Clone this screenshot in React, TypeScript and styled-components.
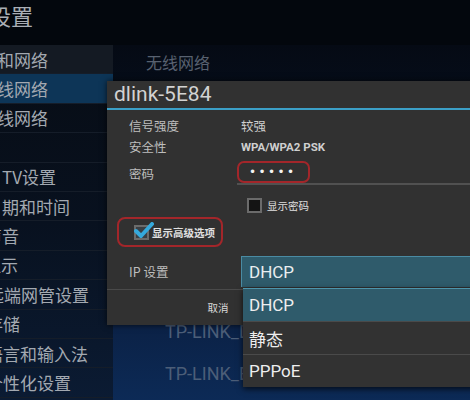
import styled, {createGlobalStyle} from 'styled-components';

const GlobalStyle = createGlobalStyle`
  html, body {
    margin: 0;
    padding: 0;
    background: #04080f;
  }
  * {
    box-sizing: border-box;
  }
`;

interface MenuItem {
  label: string;
  shift: number;
  kind?: 'header' | 'selected' | 'blank';
}

const menu: MenuItem[] = [
  {label: '无线和网络', shift: -37, kind: 'header'},
  {label: '无线网络', shift: -20, kind: 'selected'},
  {label: '有线网络', shift: -20},
  {label: '', shift: 0, kind: 'blank'},
  {label: 'TV设置', shift: 2},
  {label: '日期和时间', shift: -15},
  {label: '声音', shift: -15},
  {label: '显示', shift: -16},
  {label: '远端网管设置', shift: -13},
  {label: '存储', shift: -14},
  {label: '语言和输入法', shift: -14},
  {label: '个性化设置', shift: -14},
];

const networks = [
  'dlink-5E84',
  'ChinaNet-8Fq2',
  'TP-LINK_A3',
  'Tenda_07C1',
  'MERCURY_52',
  'TP-LINK_D',
  'TP-LINK_E',
];

const ipModes = ['DHCP', '静态', 'PPPoE'];

const App = () => {
  return (
    <Screen>
      <GlobalStyle />
      <TitleBar>
        <TitleText>设置</TitleText>
      </TitleBar>
      <Body>
        <LeftMenu>
          {menu.map((item, i) => (
            <MenuRow key={i} kind={item.kind}>
              <MenuLabel style={{marginLeft: item.shift}}>{item.label}</MenuLabel>
            </MenuRow>
          ))}
        </LeftMenu>
        <RightPane>
          <PaneHeader>无线网络</PaneHeader>
          <NetworkList>
            {networks.map(n => (
              <NetworkRow key={n}>{n}</NetworkRow>
            ))}
          </NetworkList>
        </RightPane>
      </Body>

      <Dialog>
        <DialogTitle>dlink-5E84</DialogTitle>
        <DialogContent>
          <InfoRow>
            <Label>信号强度</Label>
            <Value>较强</Value>
          </InfoRow>
          <InfoRow>
            <Label>安全性</Label>
            <Value bold>WPA/WPA2 PSK</Value>
          </InfoRow>
          <PasswordRow>
            <Label>密码</Label>
            <PasswordField>
              <Marked>
                <Dots>•••••</Dots>
              </Marked>
            </PasswordField>
          </PasswordRow>
          <CheckRow>
            <Spacer />
            <CheckLabel>
              <Box />
              <SmallText>显示密码</SmallText>
            </CheckLabel>
          </CheckRow>
          <AdvancedRow>
            <AdvancedMark>
              <Box checked>
                <svg width="20" height="18" viewBox="0 0 20 18">
                  <path
                    d="M2 9 L7 14 L18 2"
                    fill="none"
                    stroke="#35a9dc"
                    strokeWidth="4"
                    strokeLinecap="round"
                    strokeLinejoin="round"
                  />
                </svg>
              </Box>
              <SmallText bold>显示高级选项</SmallText>
            </AdvancedMark>
          </AdvancedRow>
          <IpRow>
            <Label>IP 设置</Label>
            <Spinner>DHCP</Spinner>
          </IpRow>
        </DialogContent>
        <Footer>
          <FooterButton>取消</FooterButton>
          <FooterButton>连接</FooterButton>
        </Footer>
      </Dialog>

      <Popup>
        {ipModes.map((m, i) => (
          <PopupRow key={m} selected={i === 0}>
            {m}
          </PopupRow>
        ))}
      </Popup>
    </Screen>
  );
};

const Screen = styled.div`
  position: relative;
  width: 470px;
  height: 400px;
  overflow: hidden;
  background: #04080f;
  font-family: 'Roboto', 'Noto Sans CJK SC', sans-serif;
  display: flex;
  flex-direction: column;
`;
const TitleBar = styled.div`
  height: 45px;
  flex: none;
  background: #03070d;
  display: flex;
  align-items: center;
  overflow: hidden;
`;
const TitleText = styled.div`
  margin-left: -11px;
  margin-top: -16px;
  font-size: 22px;
  color: #a9aeb5;
  font-family: 'Noto Sans CJK SC', sans-serif;
`;
const Body = styled.div`
  flex: 1;
  display: grid;
  grid-template-columns: 113px 1fr;
  min-height: 0;
`;
const LeftMenu = styled.div`
  overflow: hidden;
  background: linear-gradient(180deg, #070c14 0%, #08111f 50%, #0b1b33 100%);
`;
const MenuRow = styled.div<{kind?: string}>`
  height: 29.4px;
  display: flex;
  align-items: center;
  white-space: nowrap;
  overflow: hidden;
  border-bottom: 1px solid #151d29;
  background: ${p =>
    p.kind === 'header' ? '#141a23' : p.kind === 'selected' ? '#0d3557' : 'transparent'};
`;
const MenuLabel = styled.span`
  font-size: 17px;
  color: #a3a9b1;
  font-family: 'Noto Sans CJK SC', sans-serif;
`;
const RightPane = styled.div`
  background: linear-gradient(180deg, #050a14 0%, #081529 45%, #0b2247 80%, #0c2a56 100%);
  overflow: hidden;
`;
const PaneHeader = styled.div`
  height: 34px;
  padding-left: 33px;
  display: flex;
  align-items: center;
  font-size: 16px;
  color: #586170;
  font-family: 'Noto Sans CJK SC', sans-serif;
`;
const NetworkList = styled.div`
  margin-top: 21px;
`;
const NetworkRow = styled.div`
  height: 42px;
  padding-left: 52px;
  display: flex;
  align-items: center;
  font-size: 18px;
  color: #4c5e78;
`;
const Dialog = styled.div`
  position: absolute;
  left: 107px;
  top: 81px;
  width: 380px;
  height: 244px;
  background: #313131;
  box-shadow: 0 0 6px rgba(0, 0, 0, 0.7);
  display: flex;
  flex-direction: column;
`;
const DialogTitle = styled.div`
  height: 29px;
  padding-left: 7px;
  font-size: 21px;
  line-height: 27px;
  color: #d2d2d2;
  border-bottom: 2px solid #3b9fc7;
`;
const DialogContent = styled.div`
  flex: 1;
  padding-top: 5px;
  display: flex;
  flex-direction: column;
`;
const InfoRow = styled.div`
  height: 21px;
  display: grid;
  grid-template-columns: 134px 1fr;
  align-items: center;
`;
const Label = styled.div`
  padding-left: 22px;
  font-size: 12.5px;
  color: #bdbdbd;
  font-family: 'Noto Sans CJK SC', sans-serif;
`;
const Value = styled.div<{bold?: boolean}>`
  font-size: ${p => (p.bold ? '11.5px' : '12.5px')};
  font-weight: ${p => (p.bold ? 700 : 400)};
  color: #cfcfcf;
`;
const PasswordRow = styled.div`
  margin-top: 4px;
  display: grid;
  grid-template-columns: 130px 1fr;
  align-items: center;
`;
const PasswordField = styled.div`
  height: 24px;
  border-bottom: 2px solid #515151;
`;
const Marked = styled.div`
  width: 73px;
  height: 22px;
  border: 2px solid #a3262a;
  border-radius: 7px;
  display: flex;
  align-items: center;
  padding-left: 10px;
`;
const Dots = styled.span`
  font-size: 12px;
  letter-spacing: 2.4px;
  color: #f2f2f2;
  font-family: 'DejaVu Sans', sans-serif;
`;
const CheckRow = styled.div`
  padding-top: 13px;
  display: grid;
  grid-template-columns: 140px 1fr;
`;
const Spacer = styled.div``;
const CheckLabel = styled.div`
  display: flex;
  align-items: center;
  gap: 5px;
`;
const Box = styled.div<{checked?: boolean}>`
  position: relative;
  width: 15px;
  height: 15px;
  border: 2px solid #6b6b6b;
  background: ${p => (p.checked ? '#3a3f44' : '#141414')};
  flex: none;
  svg {
    position: absolute;
    left: -2px;
    top: -5px;
  }
`;
const SmallText = styled.span<{bold?: boolean}>`
  font-size: 10.5px;
  font-weight: ${p => (p.bold ? 700 : 400)};
  color: #e0e0e0;
  font-family: 'Noto Sans CJK SC', sans-serif;
`;
const AdvancedRow = styled.div`
  margin-top: 4px;
  padding-left: 10px;
`;
const AdvancedMark = styled.div`
  width: 106px;
  height: 30px;
  border: 2px solid #a3262a;
  border-radius: 8px;
  display: flex;
  align-items: center;
  gap: 3px;
  padding-left: 15px;
`;
const IpRow = styled.div`
  margin-top: 9px;
  display: grid;
  grid-template-columns: 134px 1fr;
  align-items: center;
`;
const Spinner = styled.div`
  height: 31px;
  background: #2f5b6b;
  border-top: 1px solid #4a8ba3;
  border-left: 1px solid #4a8ba3;
  padding-left: 7px;
  display: flex;
  align-items: center;
  font-size: 17px;
  color: #e8eef0;
`;
const Footer = styled.div`
  height: 36px;
  border-top: 1px solid #4a4a4a;
  display: grid;
  grid-template-columns: 222px 1fr;
`;
const FooterButton = styled.div`
  display: flex;
  align-items: center;
  justify-content: center;
  font-size: 10.5px;
  color: #d8d8d8;
  font-family: 'Noto Sans CJK SC', sans-serif;
`;
const Popup = styled.div`
  position: absolute;
  left: 243px;
  top: 288px;
  width: 240px;
  background: #323232;
  box-shadow: 0 2px 6px rgba(0, 0, 0, 0.7);
`;
const PopupRow = styled.div<{selected?: boolean}>`
  height: 33px;
  padding-left: 6px;
  display: flex;
  align-items: center;
  font-size: 17px;
  color: #eeeeee;
  background: ${p => (p.selected ? '#2f5b6b' : '#323232')};
  border-top: 1px solid ${p => (p.selected ? '#4e94ab' : '#4a4a4a')};
`;

export default App;
